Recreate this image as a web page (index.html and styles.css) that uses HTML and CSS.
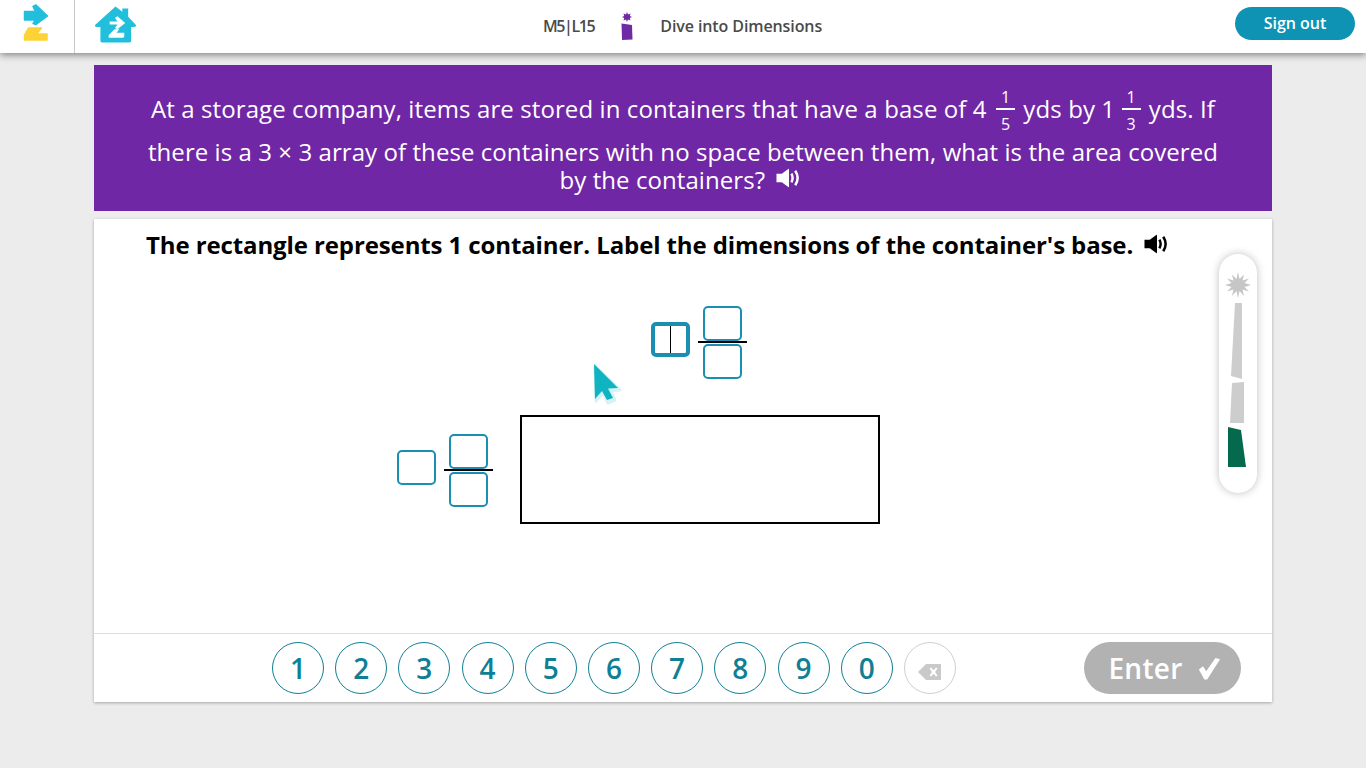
FILE: index.html
```html
<!DOCTYPE html>
<html lang="en">
<head>
  <meta charset="UTF-8" />
  <title>Dive into Dimensions</title>
  <meta name="viewport" content="width=device-width, initial-scale=1" />
  <link rel="stylesheet" href="styles.css">
</head>
<body>

  <header class="topbar">
    <div class="topbar-left">
      <a class="logo-cell" href="#">
        <svg width="28" height="38" viewBox="0 0 28 38">
          <path d="M3.5 7.5 H14.5 L12 2.5 L15 1 L26.5 12 L15 20.5 L12 19.5 L14.5 16 H3.5 Z" fill="#22bfdd" stroke="#22bfdd" stroke-width="1.5" stroke-linejoin="round"/>
          <path d="M7.5 24 H20.5 L15.5 30 H26 V36 H3.5 V31 Z" fill="#fdd234" stroke="#fdd234" stroke-width="1.5" stroke-linejoin="round"/>
        </svg>
      </a>
      <a class="home-cell" href="#">
        <svg width="43" height="37" viewBox="0 0 44 38">
          <path fill-rule="evenodd" fill="#22bfdd" d="M22 0.5 L29 6 V2.5 H35 V11 L43 19.5 Q43.5 21.5 41 21.5 H38 V36 Q38 37.5 36.5 37.5 H8 Q6.5 37.5 6.5 36 V21.5 H3 Q0.5 21.5 1 19.5 Z M16 16 H24 L21.5 12 L24 10.5 L32 17.5 L24 24 L21.5 22.5 L24 19 H16 Z M21 24 H26 L23 27.5 H31 V31 Q31 32.5 29.5 32.5 H15 V30 Z"/>
        </svg>
      </a>
    </div>
    <div class="lesson">
      <span class="lesson-code">M5|L15</span>
      <svg class="lesson-icon" width="14" height="28" viewBox="0 0 14 28">
        <path fill="#6f2aa3" d="M7 0 L8 2.5 L10.5 1.5 L9.8 4 L12 5 L9.8 6 L10.5 8.5 L8 7.5 L7 10 L6 7.5 L3.5 8.5 L4.2 6 L2 5 L4.2 4 L3.5 1.5 L6 2.5 Z"/>
        <path fill="#6f2aa3" d="M1.5 11.5 L12 13 L12.5 27.5 L2 28 Z"/>
      </svg>
      <span class="lesson-name">Dive into Dimensions</span>
    </div>
    <a class="signout" href="#">Sign out</a>
  </header>

  <main class="lesson-window">
    <section class="problem">
      <p class="problem-first">At a storage company, items are stored in containers that have a base of 4
        <span class="mixed"><span>1</span><span class="mixed-bottom">5</span></span> yds by 1
        <span class="mixed"><span>1</span><span class="mixed-bottom">3</span></span> yds. If</p>
      <p class="problem-rest">there is a 3 × 3 array of these containers with no space between them, what is the area covered by the containers?
        <svg class="speaker" width="25" height="20" viewBox="0 0 26 20"><use href="#speaker-icon"/></svg></p>
    </section>

    <section class="work">
      <h2 class="prompt">The rectangle represents 1 container. Label the dimensions of the container's base.
        <svg class="speaker" width="25" height="20" viewBox="0 0 26 20"><use href="#speaker-icon"/></svg></h2>

      <div class="diagram">
        <div class="answer answer-top">
          <div class="box box-whole box-active"><i class="caret"></i></div>
          <div class="fraction">
            <div class="box"></div>
            <div class="box"></div>
          </div>
        </div>
        <div class="answer answer-left">
          <div class="box box-whole"></div>
          <div class="fraction">
            <div class="box"></div>
            <div class="box"></div>
          </div>
        </div>
        <div class="rect"></div>
      </div>

      <svg class="cursor" width="30" height="44" viewBox="0 0 30 44">
        <path d="M2 3 L27 27 L18 27.5 L22 37 L15 40 L10 30 L3 38 Z" fill="#d6f2f4" stroke="#d6f2f4" stroke-width="3" stroke-linejoin="round"/>
        <path d="M1 1 L25 25 L15 25.5 L20 35 L14 37 L9 28 L2 36 Z" fill="#0fb3c1"/>
      </svg>

      <div class="tool-rail">
        <svg width="28" height="210" viewBox="0 0 28 210">
          <path fill="#c6c6c6" d="M14 1 L15.5 8 L20 3.5 L18.5 9.5 L25 7.5 L20.5 12 L27 14 L20.5 16 L25 20.5 L18.5 18.5 L20 25 L15.5 20 L14 27 L12.5 20 L8 25 L9.5 18.5 L3 20.5 L7.5 16 L1 14 L7.5 12 L3 7.5 L9.5 9.5 L8 3.5 L12.5 8 Z"/>
          <path fill="#cdcdcd" d="M11 32 H18 V108 L7 105 Z"/>
          <path fill="#cdcdcd" d="M8 112 L20 111 V152 H6 Z"/>
          <path fill="#056a4d" d="M4 156 L17 159 L22 196 H4 Z"/>
        </svg>
      </div>

      <footer class="keypad">
        <div class="keys">
          <button class="key">1</button>
          <button class="key">2</button>
          <button class="key">3</button>
          <button class="key">4</button>
          <button class="key">5</button>
          <button class="key">6</button>
          <button class="key">7</button>
          <button class="key">8</button>
          <button class="key">9</button>
          <button class="key">0</button>
          <button class="key key-back">
            <svg width="24" height="16" viewBox="0 0 24 16">
              <path fill="#c9c9c9" fill-rule="evenodd" d="M8 0 H23 V16 H8 L0 8 Z M11.5 4.5 L13 3.5 L15.5 6.2 L18 3.5 L19.5 4.5 L17 8 L19.5 11.5 L18 12.5 L15.5 9.8 L13 12.5 L11.5 11.5 L14 8 Z"/>
            </svg>
          </button>
        </div>
        <button class="enter">Enter
          <svg width="24" height="23" viewBox="0 0 26 24"><path fill="#fff" d="M2 13 L6.5 9.5 L10 15 L20 0.5 L25 2 L11 24 H8 Z"/></svg>
        </button>
      </footer>
    </section>
  </main>

  <svg class="icon-defs" width="0" height="0">
    <symbol id="speaker-icon" viewBox="0 0 26 20">
      <path fill="currentColor" d="M0.5 5.5 H6 L13.5 0 V20 L6 14.5 H0.5 Z"/>
      <path fill="none" stroke="currentColor" stroke-width="2.6" d="M16 5.5 Q18.6 10 16 14.5"/>
      <path fill="none" stroke="currentColor" stroke-width="2.6" d="M20 2.5 Q25 10 20 17.5"/>
    </symbol>
  </svg>

</body>
</html>
```

FILE: styles.css
```css
:root {
  --color-bg: #ececec;
  --color-purple: #7027a5;
  --color-teal: #1b8fb1;
  --color-key: #0f7f95;
  --color-grey: #b2b2b2;
}

* {
  box-sizing: border-box;
}

body {
  margin: 0;
  height: 768px;
  overflow: hidden;
  background-color: var(--color-bg);
  font-family: 'Open Sans', 'Noto Sans', sans-serif;
  color: #000;
}

.icon-defs {
  position: absolute;
}

/* top bar */
.topbar {
  position: relative;
  height: 53px;
  background: #fff;
  box-shadow: 0 2px 7px rgba(0, 0, 0, 0.45);
  display: flex;
  align-items: center;
  justify-content: space-between;
  padding-right: 11px;
}

.topbar-left {
  display: flex;
  align-items: stretch;
  height: 100%;
  width: 300px;
}

.logo-cell {
  width: 75px;
  border-right: 1px solid #c9c9c9;
  padding: 4px 0 0 21px;
}

.home-cell {
  padding: 6px 0 0 19px;
}

.lesson {
  display: flex;
  align-items: center;
  font-size: 16px;
  font-weight: 600;
  color: #4a4a4a;
  position: absolute;
  left: 543px;
  top: 12px;
}

.lesson-code {
  letter-spacing: -1.4px;
}

.lesson-name {
  letter-spacing: -0.1px;
}

.lesson-icon {
  margin: 0 26px 0 26px;
}

.signout {
  width: 120px;
  height: 33px;
  border-radius: 17px;
  background: #0f93b5;
  color: #fff;
  font-size: 16px;
  font-weight: 600;
  text-decoration: none;
  display: flex;
  align-items: center;
  justify-content: center;
  margin-top: -6px;
  padding-bottom: 2px;
}

/* lesson area */
.lesson-window {
  width: 1178px;
  margin: 12px 0 0 94px;
}

.problem {
  height: 146px;
  background: var(--color-purple);
  color: #fff;
  font-size: 24px;
  letter-spacing: 0.07px;
  text-align: center;
  padding: 21px 40px 0;
}

.problem p {
  margin: 0;
}

.problem-first {
  height: 52px;
  line-height: 45px;
  letter-spacing: 0.1px;
}

.problem-rest {
  line-height: 28px;
  padding: 0 10px;
}

.mixed {
  display: inline-flex;
  flex-direction: column;
  vertical-align: middle;
  width: 19px;
  margin: -12px 2px -10px 3px;
  font-size: 16px;
  line-height: 22px;
  letter-spacing: 0;
  text-align: center;
}

.mixed ~ .mixed {
  margin-left: 0;
}

.mixed-bottom {
  border-top: 2px solid #fff;
  padding-top: 3px;
}

.speaker {
  color: #000;
  margin-left: 5px;
  vertical-align: 0;
}

.problem .speaker {
  color: #fff;
  margin-right: 5px;
  vertical-align: 1px;
}

.work {
  position: relative;
  height: 483px;
  margin-top: 8px;
  background: #fff;
  box-shadow: 0 1px 3px rgba(0, 0, 0, 0.3);
}

.prompt {
  margin: 0;
  padding: 9px 0 0 52px;
  font-size: 24px;
  font-weight: 700;
  letter-spacing: -0.11px;
  line-height: 33px;
  height: 87px;
  white-space: nowrap;
}

/* diagram */
.diagram {
  display: grid;
  grid-template-columns: 303px 96px 27px 360px;
  grid-template-rows: 73px 36px 109px;
}

.answer {
  display: flex;
  align-items: flex-start;
  gap: 8px;
}

.answer-top {
  grid-column: 4;
  grid-row: 1;
  margin-left: 131px;
}

.answer-left {
  grid-column: 2;
  grid-row: 3;
  margin-top: 19px;
  height: 73px;
}

.rect {
  grid-column: 4;
  grid-row: 3;
  border: 2px solid #000;
}

.box {
  width: 39px;
  height: 35px;
  border: 2px solid var(--color-teal);
  border-radius: 5px;
  background: #fff;
}

.box-whole {
  margin-top: 16px;
}

.box-active {
  border-width: 4px;
  display: flex;
  justify-content: center;
}

.caret {
  width: 1.5px;
  background: #000;
}

.fraction {
  width: 49px;
  display: flex;
  flex-direction: column;
  align-items: center;
  gap: 3px;
  background: linear-gradient(#000, #000) 0 35px / 100% 2px no-repeat;
}

.cursor {
  position: absolute;
  left: 499px;
  top: 144px;
}

.tool-rail {
  position: absolute;
  left: 1125px;
  top: 35px;
  width: 38px;
  height: 239px;
  border-radius: 19px;
  background: #fff;
  box-shadow: 0 0 9px rgba(0, 0, 0, 0.25);
  padding: 17px 0 0 5px;
}

/* keypad */
.keypad {
  position: absolute;
  left: 0;
  right: 0;
  bottom: 0;
  height: 69px;
  border-top: 1px solid #dedede;
  padding: 8px 31px 0 178px;
  display: flex;
  justify-content: space-between;
}

.keys {
  display: flex;
  gap: 11.2px;
}

.key {
  width: 52px;
  height: 52px;
  padding: 0;
  border: 1px solid var(--color-key);
  border-radius: 50%;
  background: #fff;
  color: var(--color-key);
  font-family: inherit;
  font-size: 28px;
  font-weight: 600;
}

.key-back {
  border-color: #cfcfcf;
  padding-top: 2px;
}

.enter {
  width: 157px;
  height: 52px;
  border: none;
  border-radius: 26px;
  background: var(--color-grey);
  color: #fff;
  font-family: inherit;
  font-size: 28px;
  font-weight: 600;
  letter-spacing: 0.3px;
  display: flex;
  align-items: center;
  justify-content: center;
  gap: 14px;
  padding-right: 2px;
}
```
